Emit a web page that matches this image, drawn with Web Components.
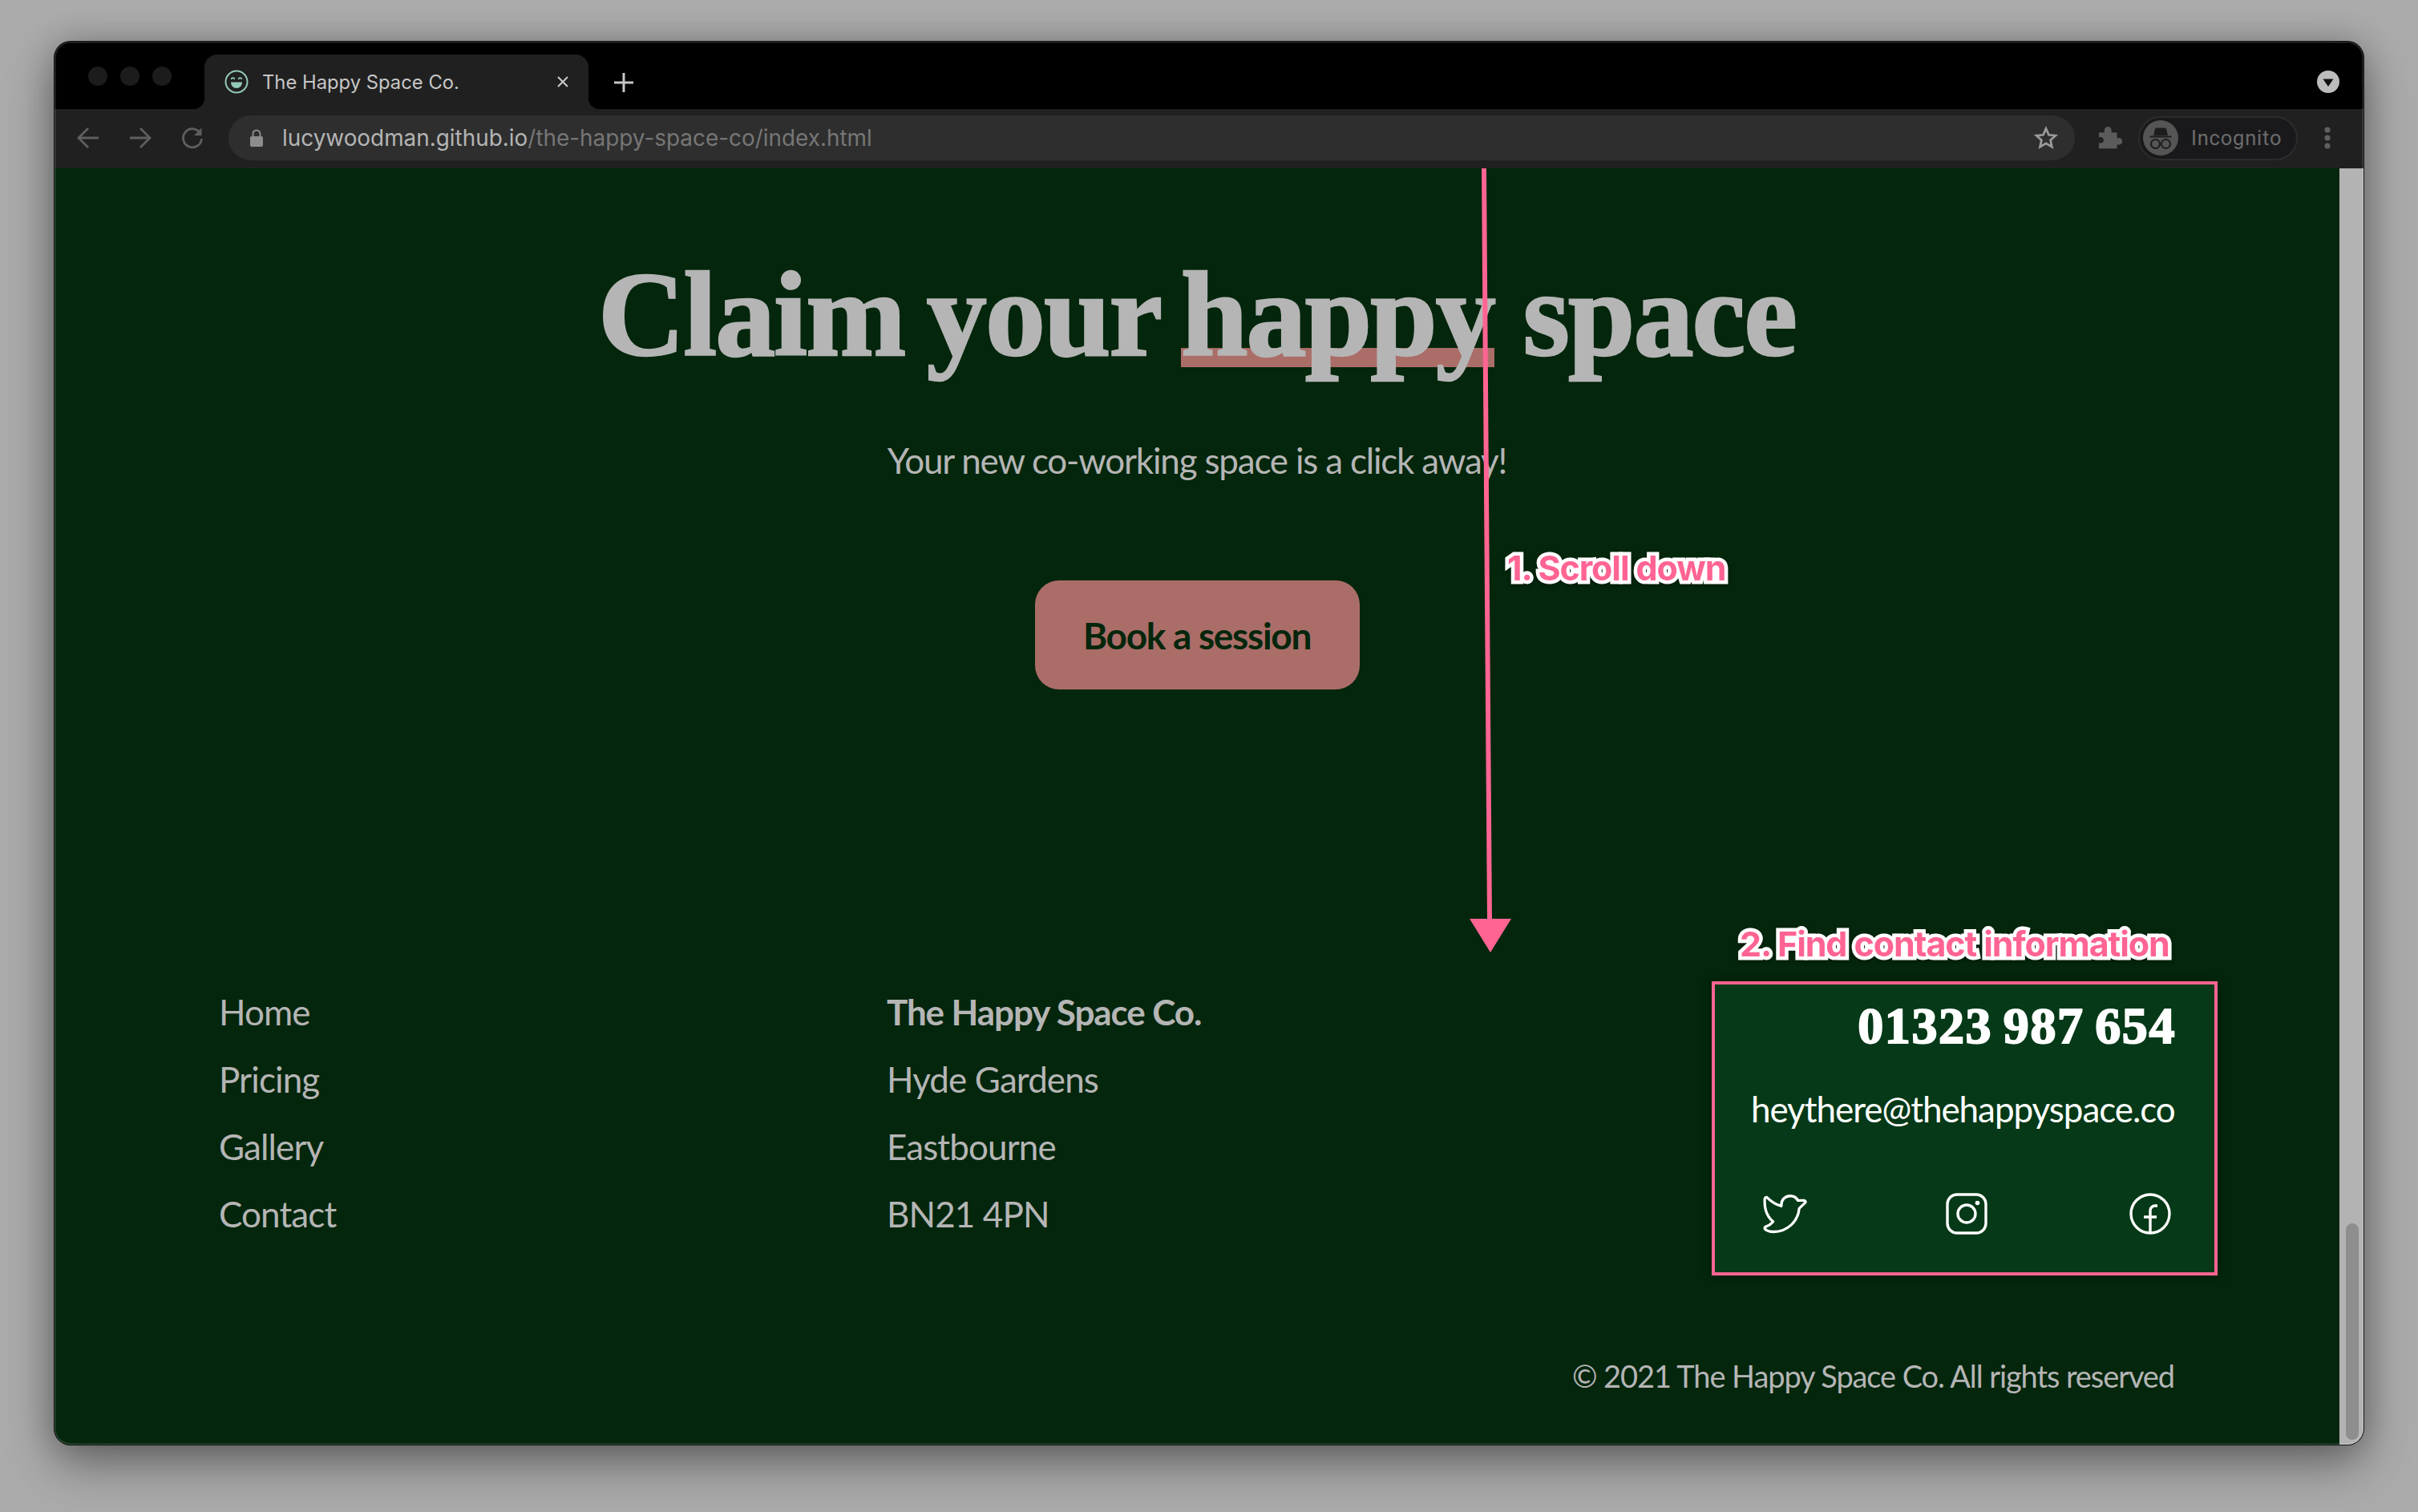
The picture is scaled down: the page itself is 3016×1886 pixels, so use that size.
<!DOCTYPE html>
<html lang="en">
<head>
<meta charset="utf-8">
<title>The Happy Space Co.</title>
<style>
  html, body { margin: 0; height: 100%; }
  body {
    position: relative;
    width: 3016px;
    height: 1886px;
    overflow: hidden;
    background: #ababab;
    font-family: Lato, "Liberation Sans", sans-serif;
  }
</style>
</head>
<body>
  <browser-window>
    <landing-hero></landing-hero>
    <site-footer></site-footer>
  </browser-window>
  <scroll-arrow></scroll-arrow>
  <call-out style="left:1880px;top:684px">1. Scroll down</call-out>
  <call-out style="left:2170px;top:1153px">2. Find contact information</call-out>

<script>
// --- Helper: every element gets its own open shadow root ---
function define(name, html) {
  customElements.define(name, class extends HTMLElement {
    constructor() {
      super();
      this.attachShadow({ mode: 'open' }).innerHTML = html;
    }
  });
}

// --- Browser chrome ---
define('tab-strip', `
  <style>
    :host { display: flex; align-items: flex-end; height: 84px; background: #000; padding: 0 30px 0 42px; }
    .lights { display: flex; gap: 16px; align-self: flex-start; margin-top: 31px; }
    .lights i { width: 24px; height: 24px; border-radius: 50%; background: #1c1c1c; }
    .tab {
      position: relative; display: flex; align-items: center; box-sizing: border-box;
      width: 479px; height: 68px; margin-left: 41px; padding: 0 24px 0 25px;
      background: #202020; border-radius: 16px 16px 0 0;
      font: 400 23.800px Inter, sans-serif; color: #c6c6c6;
    }
    .tab::before, .tab::after { content: ''; position: absolute; bottom: 0; width: 14px; height: 14px; }
    .tab::before { left: -14px; background: radial-gradient(circle at 0 0, transparent 14px, #202020 14.5px); }
    .tab::after { right: -14px; background: radial-gradient(circle at 100% 0, transparent 14px, #202020 14.5px); }
    .title { margin-left: 17px; flex: 1; }
    .plus { margin-left: 31px; margin-bottom: 20px; }
    .profile { margin-left: auto; margin-bottom: 20px; }
    svg { display: block; }
  </style>
  <div class="lights"><i></i><i></i><i></i></div>
  <div class="tab">
    <svg width="30" height="30" viewBox="0 0 30 30" fill="none" stroke="#93c9b7" stroke-width="2">
      <circle cx="15" cy="15" r="13.5"/>
      <path d="M8.500 12c.6-2.400 3.400-2.400 4 0M17.500 12c.6-2.400 3.400-2.400 4 0" stroke-width="1.800"/>
      <path d="M8 15.500h14c0 4.500-3 7.500-7 7.500s-7-3-7-7.500z" fill="#93c9b7" stroke="none"/>
    </svg>
    <span class="title">The Happy Space Co.</span>
    <svg width="16" height="16" viewBox="0 0 16 16" stroke="#c6c6c6" stroke-width="2.200"><path d="M2 2l12 12M14 2L2 14"/></svg>
  </div>
  <svg class="plus" width="26" height="26" viewBox="0 0 26 26" stroke="#c6c6c6" stroke-width="3"><path d="M13 1v24M1 13h24"/></svg>
  <svg class="profile" width="28" height="28" viewBox="0 0 28 28"><circle cx="14" cy="14" r="14" fill="#bdbdbd"/><path d="M7.500 10.500h13L14 20z" fill="#111"/></svg>
`);

define('tool-bar', `
  <style>
    :host { display: flex; align-items: center; box-sizing: border-box; height: 74px; padding: 0 0 2px 28px; background: #202020; }
    svg { display: block; flex: none; }
    .nav { margin-right: 37px; }
    .url {
      display: flex; align-items: center; box-sizing: border-box; width: 2303px; height: 56px;
      margin-left: -6px; padding: 0 21px 0 27px; border-radius: 28px; background: #2e2e2e;
      font: 400 27.900px Inter, sans-serif; white-space: nowrap;
    }
    .url b { font-weight: 400; color: #b4b4b4; margin-left: 24px; }
    .url span { color: #767676; }
    .url .star { margin-left: auto; }
    .puzzle { margin-left: 29px; }
    .pill {
      display: flex; align-items: center; box-sizing: border-box; width: 199px; height: 55px; margin-left: 20px;
      padding-left: 4px; border-radius: 28px; border: 2px solid #2c2c2e; background: #19191b;
      font: 400 25.500px Roboto, sans-serif; color: #6b6b6b; letter-spacing: .8px;
    }
    .pill svg { margin-right: 16px; }
    .menu { margin-left: 33px; }
  </style>
  <svg class="nav" width="28" height="28" viewBox="0 0 28 28" fill="none" stroke="#5f5f5f" stroke-width="2.800"><path d="M27 14H3M14 2L2 14l12 12"/></svg>
  <svg class="nav" width="28" height="28" viewBox="0 0 28 28" fill="none" stroke="#5f5f5f" stroke-width="2.800"><path d="M1 14h24M14 2l12 12-12 12"/></svg>
  <svg class="nav" width="28" height="28" viewBox="0 0 28 28" fill="none" stroke="#5f5f5f" stroke-width="2.800"><path d="M24 8.500A11.500 11.500 0 1 0 25.500 15"/><path d="M25.500 1.500v9.500H16z" fill="#5f5f5f" stroke="none"/></svg>
  <div class="url">
    <svg width="16" height="22" viewBox="0 0 16 22"><rect y="9" width="16" height="13" rx="2" fill="#8d8d8d"/><path d="M3.500 10V6a4.500 4.500 0 0 1 9 0v4" fill="none" stroke="#8d8d8d" stroke-width="2"/></svg>
    <b>lucywoodman.github.io</b><span>/the-happy-space-co/index.html</span>
    <svg class="star" width="30" height="30" viewBox="0 0 30 30" fill="none" stroke="#9a9a9a" stroke-width="2.800" stroke-linejoin="miter"><path d="M15 3.500l3.500 7.800 8.400.9-6.300 5.600 1.800 8.300-7.400-4.300-7.400 4.300 1.800-8.300-6.300-5.600 8.400-.9z"/></svg>
  </div>
  <svg class="puzzle" width="30" height="30" viewBox="0 0 30 30" fill="#5b5b5b"><path d="M1 8h7V5a4.500 4.500 0 0 1 9 0v3h7v7h2.500a4.500 4.500 0 0 1 0 9H24v5H1v-7h2a4 4 0 0 0 0-8H1z" transform="translate(0 .5) scale(.98 .96)"/></svg>
  <div class="pill">
    <svg width="44" height="44" viewBox="0 0 44 44">
      <circle cx="22" cy="22" r="22" fill="#555"/>
      <path d="M15 10.500l1.500-1h11l1.500 1 2 8.500H13z" fill="#1d1d1d"/>
      <path d="M8.500 20.500h27" stroke="#1d1d1d" stroke-width="2.200"/>
      <g fill="none" stroke="#1d1d1d" stroke-width="2"><circle cx="15.500" cy="29.500" r="5.500"/><circle cx="28.500" cy="29.500" r="5.500"/><path d="M21 29.500h2"/></g>
    </svg>
    Incognito
  </div>
  <svg class="menu" width="8" height="28" viewBox="0 0 8 28" fill="#5f5f5f"><circle cx="4" cy="4" r="3.500"/><circle cx="4" cy="14" r="3.500"/><circle cx="4" cy="24" r="3.500"/></svg>
`);

define('browser-window', `
  <style>
    :host {
      display: flex; flex-direction: column; position: absolute; left: 68px; top: 52px;
      width: 2880px; height: 1750px; border-radius: 20px; overflow: hidden;
      background: #03260c;
      box-shadow: 0 0 0 1px #141414, 0 24px 60px rgba(0,0,0,.38), 0 0 40px rgba(0,0,0,.2);
    }
    .body { flex: 1; display: flex; min-height: 0; }
    .page { flex: 1; min-width: 0; display: flex; flex-direction: column; }
    .scrollbar { width: 30px; background: #b3b3b3; padding: 1316px 6px 6px 8px; box-sizing: border-box; }
    .scrollbar i { display: block; height: 100%; border-radius: 8px; background: #8e8e8e; }
    .edge { position: absolute; inset: 0; border-radius: 20px; box-shadow: inset 0 0 0 1.500px rgba(255,255,255,.16); pointer-events: none; }
  </style>
  <tab-strip></tab-strip>
  <tool-bar></tool-bar>
  <div class="body">
    <div class="page"><slot></slot></div>
    <div class="scrollbar"><i></i></div>
  </div>
  <div class="edge"></div>
`);

// --- Page content ---
define('landing-hero', `
  <style>
    :host { display: block; text-align: center; height: 1010px; color: #b5b5b5; }
    h1 {
      margin: 0; padding-top: 102px; font: 700 150px/160px "Liberation Serif", serif;
      letter-spacing: -1.900px; word-spacing: -8px;
      -webkit-text-stroke: 2.500px #b5b5b5;
    }
    h1 span { margin-right: 8px; background: linear-gradient(#ab6d68, #ab6d68) no-repeat 0 125px / 100% 24px; }
    p { margin: 72px 0 0; font: 400 44px/60px Lato, sans-serif; letter-spacing: -1.200px; }
    a {
      display: inline-flex; align-items: center; justify-content: center; box-sizing: border-box;
      width: 405px; height: 136px; margin-top: 120px; border-radius: 30px;
      background: #ab6d68; color: #03260c; font: 700 46px Lato, sans-serif; letter-spacing: -1.300px;
    }
  </style>
  <h1>Claim your <span>happy</span> space</h1>
  <p>Your new co-working space is a click away!</p>
  <a>Book a session</a>
`);

define('contact-card', `
  <style>
    :host {
      display: block; box-sizing: border-box; width: 631px; height: 367px; margin: 4px -54px 0 0;
      padding: 0 50px 0 45px; border: 4px solid #ff6492; background: #053917; color: #fff; text-align: right;
      letter-spacing: 0; box-shadow: 0 0 12px rgba(0,0,0,.3);
    }
    .phone {
      font: 700 64px/72px "Liberation Serif", serif; letter-spacing: 1.600px; word-spacing: -4px; padding-top: 16px; margin-right: -2px;
      -webkit-text-stroke: 2px #fff;
    }
    .mail { font: 400 44px/60px Lato, sans-serif; margin-top: 37px; letter-spacing: -1.050px; }
    .icons { display: flex; justify-content: space-between; align-items: center; margin-top: 71px; padding: 0 4px 0 10px; }
    .insta { margin-right: 4px; }
    svg { display: block; }
  </style>
  <div class="phone">01323 987 654</div>
  <div class="mail">heythere@thehappyspace.co</div>
  <div class="icons">
    <svg width="60" height="60" viewBox="0 0 256 256" fill="none" stroke="#fff" stroke-width="14" stroke-linejoin="round">
      <path d="M247 68l-33 32c-6 70-65 124-136 124-14 0-26-2-35-7-7-3-10-7-11-8a8 8 0 0 1 4-12c0 0 24-9 39-27-10-8-17-16-22-24-12-18-26-50-22-98a8 8 0 0 1 14-5c0 0 33 33 74 44v-7c0-13 5-25 14-34 9-8 20-13 33-13 17 0 33 9 41 24h32a8 8 0 0 1 8 11z"/>
    </svg>
    <svg class="insta" width="52" height="52" viewBox="0 0 52 52" fill="none" stroke="#fff" stroke-width="3.400">
      <rect x="2" y="2" width="48" height="48" rx="12"/><circle cx="26" cy="26" r="11"/><circle cx="39.500" cy="12.500" r="2.800" fill="#fff" stroke="none"/>
    </svg>
    <svg width="52" height="52" viewBox="0 0 52 52" fill="none" stroke="#fff" stroke-width="3.400">
      <circle cx="26" cy="26" r="24"/><path d="M35 16h-3a6 6 0 0 0-6 6v28M18 30h16"/>
    </svg>
  </div>
`);

define('site-footer', `
  <style>
    :host { display: block; padding: 0 206px 0 205px; color: #b5b5b5; font: 400 44px/84px Lato, sans-serif; letter-spacing: -.9px; }
    .cols { display: grid; grid-template-columns: 833px 1fr auto; }
    strong { font-weight: 700; letter-spacing: -1.100px; }
    .copy { margin-top: 95px; text-align: right; font-size: 38px; line-height: 60px; letter-spacing: -1.100px; }
  </style>
  <div class="cols">
    <div>Home<br>Pricing<br>Gallery<br>Contact</div>
    <div><strong>The Happy Space Co.</strong><br>Hyde Gardens<br>Eastbourne<br>BN21 4PN</div>
    <contact-card></contact-card>
  </div>
  <div class="copy">© 2021 The Happy Space Co. All rights reserved</div>
`);

// --- Annotations drawn on top of the screenshot ---
define('call-out', `
  <style>
    :host {
      position: absolute; white-space: nowrap; color: #ff6492;
      font: 700 43px/48px Inter, sans-serif; letter-spacing: -1.100px;
      -webkit-text-stroke: 9px #fff; paint-order: stroke fill;
      filter: drop-shadow(0 2px 2px rgba(0,0,0,.3));
    }
  </style>
  <slot></slot>
`);

define('scroll-arrow', `
  <style>
    :host { position: absolute; left: 1820px; top: 210px; width: 80px; height: 990px; }
    svg { display: block; }
  </style>
  <svg width="80" height="990" viewBox="0 0 80 990">
    <path d="M31 0L38 940" stroke="#ff6492" stroke-width="6" fill="none"/>
    <path d="M13 936h52L39 978z" fill="#ff6492"/>
  </svg>
`);
</script>
</body>
</html>
